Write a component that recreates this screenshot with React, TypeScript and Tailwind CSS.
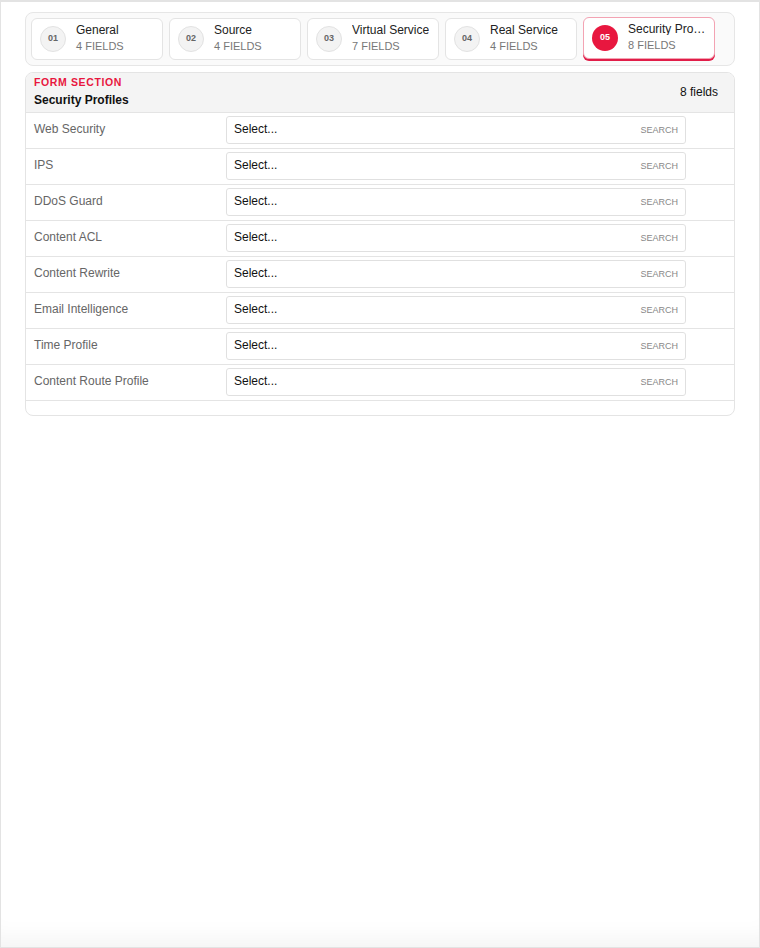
const STEPS = [
  { no: '01', title: 'General', count: 4 },
  { no: '02', title: 'Source', count: 4 },
  { no: '03', title: 'Virtual Service', count: 7 },
  { no: '04', title: 'Real Service', count: 4 },
  { no: '05', title: 'Security Profiles', count: 8 },
];

const FIELDS = [
  'Web Security',
  'IPS',
  'DDoS Guard',
  'Content ACL',
  'Content Rewrite',
  'Email Intelligence',
  'Time Profile',
  'Content Route Profile',
];

const ACTIVE = '05';

function StepCard({ no, title, count }: { no: string; title: string; count: number }) {
  const active = no === ACTIVE;

  return (
    <div
      className={`flex h-[42px] w-[132px] shrink-0 items-center gap-[10px] rounded-[6px] border bg-white pl-[8px] pr-[8px] ${
        active
          ? '-translate-y-px border-[#f3a3b3] shadow-[0_2px_0_0_#e11d48]'
          : 'border-[#e4e4e4]'
      }`}
    >
      <div
        className={`flex h-[26px] w-[26px] shrink-0 items-center justify-center rounded-full text-[9px] font-bold ${
          active
            ? 'bg-[#e8173f] text-white'
            : 'border border-[#e2e2e2] bg-[#f3f3f3] text-[#666]'
        }`}
      >
        {no}
      </div>
      <div className="min-w-0 pb-[2px] leading-none">
        <div className="truncate text-[12px] text-[#222]">{title}</div>
        <div className="mt-[5px] text-[11px] text-[#777]">{count} FIELDS</div>
      </div>
    </div>
  );
}

export default function App() {
  return (
    <div
      className="h-[948px] border border-t-2 border-[#e3e3e3] bg-white px-[24px] pt-[10px] shadow-[inset_0_-28px_24px_-20px_rgba(0,0,0,0.05)]"
      style={{ fontFamily: '"Liberation Sans", Arial, sans-serif' }}
    >
      <div className="flex h-[54px] gap-[6px] rounded-[8px] border border-[#e6e6e6] bg-[#fafafa] p-[5px]">
        {STEPS.map((s) => (
          <StepCard key={s.no} {...s} />
        ))}
      </div>

      <section className="mt-[6px] overflow-hidden rounded-[8px] border border-[#e4e4e4] bg-white">
        <header className="flex h-[40px] items-center justify-between border-b border-[#e4e4e4] bg-[#f4f4f4] pb-[2px] pl-[8px] pr-[16px]">
          <div>
            <p className="text-[10.5px] font-bold uppercase leading-none tracking-[0.06em] text-[#e8173f]">
              Form Section
            </p>
            <h2 className="mt-[6px] text-[12px] font-bold leading-none text-[#111]">
              Security Profiles
            </h2>
          </div>
          <span className="text-[12px] text-[#111]">{FIELDS.length} fields</span>
        </header>

        {FIELDS.map((label) => (
          <div
            key={label}
            className="flex h-[36px] items-start border-b border-[#e4e4e4] pl-[8px] pt-[3px]"
          >
            <span className="w-[192px] shrink-0 pt-[6px] text-[12px] leading-[14px] text-[#666]">
              {label}
            </span>
            <div className="flex h-[28px] w-[460px] items-center justify-between rounded-[3px] border border-[#e0e0e0] bg-white pb-[2px] pl-[7px] pr-[7px]">
              <span className="text-[12px] text-[#111]">Select...</span>
              <span className="pt-[4px] text-[9px] text-[#888]">SEARCH</span>
            </div>
          </div>
        ))}

        <div className="h-[14px]" />
      </section>
    </div>
  );
}
